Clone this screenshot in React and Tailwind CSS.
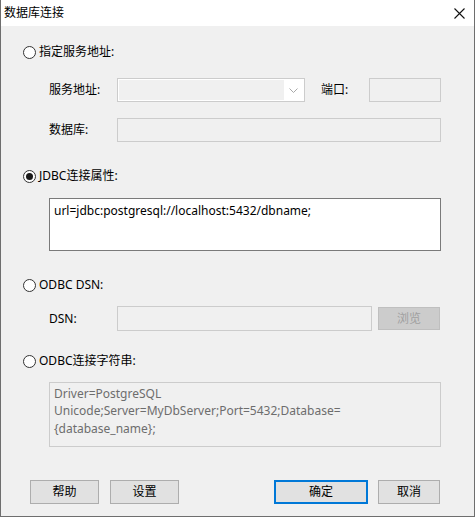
import React from "react";

const font = { fontFamily: '"Noto Sans", "Noto Sans CJK SC", sans-serif' };

const Radio = ({ checked, label }) => (
  <div className="flex h-4 items-center">
    <span className="flex h-[13px] w-[13px] items-center justify-center rounded-full border border-[#333333] bg-white">
      {checked && <span className="h-[7px] w-[7px] rounded-full bg-[#1a1a1a]" />}
    </span>
    <span className="ml-[3px] text-[12px] text-black">{label}</span>
  </div>
);

const Field = ({ className = "" }) => (
  <div className={`h-6 border border-[#cccccc] bg-[#f0f0f0] ${className}`} />
);

const Button = ({ children, primary, className = "" }) => (
  <button
    className={`flex h-6 items-center justify-center bg-[#e1e1e1] text-[12px] text-black ${
      primary ? "border-2 border-[#0078d7]" : "border border-[#adadad]"
    } ${className}`}
  >
    {children}
  </button>
);

export default function App() {
  return (
    <div
      className="flex h-[517px] w-[475px] flex-col border-x border-b border-[#6e6e6e] bg-[#f0f0f0]"
      style={font}
    >
      {/* Title bar */}
      <div className="flex h-[26px] items-center justify-between bg-white pl-[3px] pr-[9px]">
        <span className="text-[12px] text-black">数据库连接</span>
        <svg width="11" height="11" viewBox="0 0 11 11">
          <path d="M0.5 0.5 L10.5 10.5 M10.5 0.5 L0.5 10.5" stroke="#111" strokeWidth="1.1" />
        </svg>
      </div>

      <div className="flex flex-col pl-[22px]">
        {/* Server */}
        <div className="mt-[18px]">
          <Radio label="指定服务地址:" />
        </div>
        <div className="ml-[26px] mt-[18px] flex items-center">
          <span className="w-[68px] text-[12px]">服务地址:</span>
          <div className="flex h-6 w-[188px] border border-[#cccccc] bg-white p-[1px]">
            <div className="flex-1 bg-[#f0f0f0]" />
            <div className="flex w-[19px] items-center justify-center">
              <svg width="9" height="5" viewBox="0 0 9 5">
                <path d="M0.5 0.5 L4.5 4.5 L8.5 0.5" stroke="#a8a8a8" fill="none" />
              </svg>
            </div>
          </div>
          <span className="ml-4 w-[48px] text-[12px]">端口:</span>
          <Field className="w-[72px]" />
        </div>
        <div className="ml-[26px] mt-4 flex items-center">
          <span className="w-[68px] text-[12px]">数据库:</span>
          <Field className="w-[324px]" />
        </div>

        {/* JDBC */}
        <div className="mt-[26px]">
          <Radio checked label="JDBC连接属性:" />
        </div>
        <div className="ml-[26px] mt-[14px] h-[53px] w-[392px] border border-[#7a7a7a] bg-white px-[4px] pt-[3px] text-[12px] leading-[17px] text-black">
          url=jdbc:postgresql://localhost:5432/dbname;
        </div>

        {/* ODBC DSN */}
        <div className="mt-[26px]">
          <Radio label="ODBC DSN:" />
        </div>
        <div className="ml-[26px] mt-[13px] flex items-center">
          <span className="w-[68px] text-[12px]">DSN:</span>
          <div className="h-[25px] w-[255px] border border-[#cccccc] bg-[#f0f0f0]" />
          <div className="ml-[6px] flex h-[23px] w-[62px] items-center justify-center border border-[#bfbfbf] bg-[#cccccc] text-[12px] text-[#a0a0a0]">
            浏览
          </div>
        </div>

        {/* ODBC string */}
        <div className="mt-[22px]">
          <Radio label="ODBC连接字符串:" />
        </div>
        <div className="ml-[26px] mt-[13px] h-[65px] w-[392px] border border-[#cccccc] bg-[#f0f0f0] px-[4px] pt-[2px] text-[12px] leading-[17.3px] text-[#6d6d6d]">
          Driver=PostgreSQL
          <br />
          Unicode;Server=MyDbServer;Port=5432;Database=
          <br />
          {"{database_name};"}
        </div>
      </div>

      {/* Buttons */}
      <div className="mt-auto mb-3 flex items-center pl-[29px]">
        <Button className="w-[69px]">帮助</Button>
        <Button className="ml-[11px] w-[69px]">设置</Button>
        <Button primary className="ml-[95px] w-[94px]">确定</Button>
        <Button className="ml-[10px] w-[62px]">取消</Button>
      </div>
    </div>
  );
}
